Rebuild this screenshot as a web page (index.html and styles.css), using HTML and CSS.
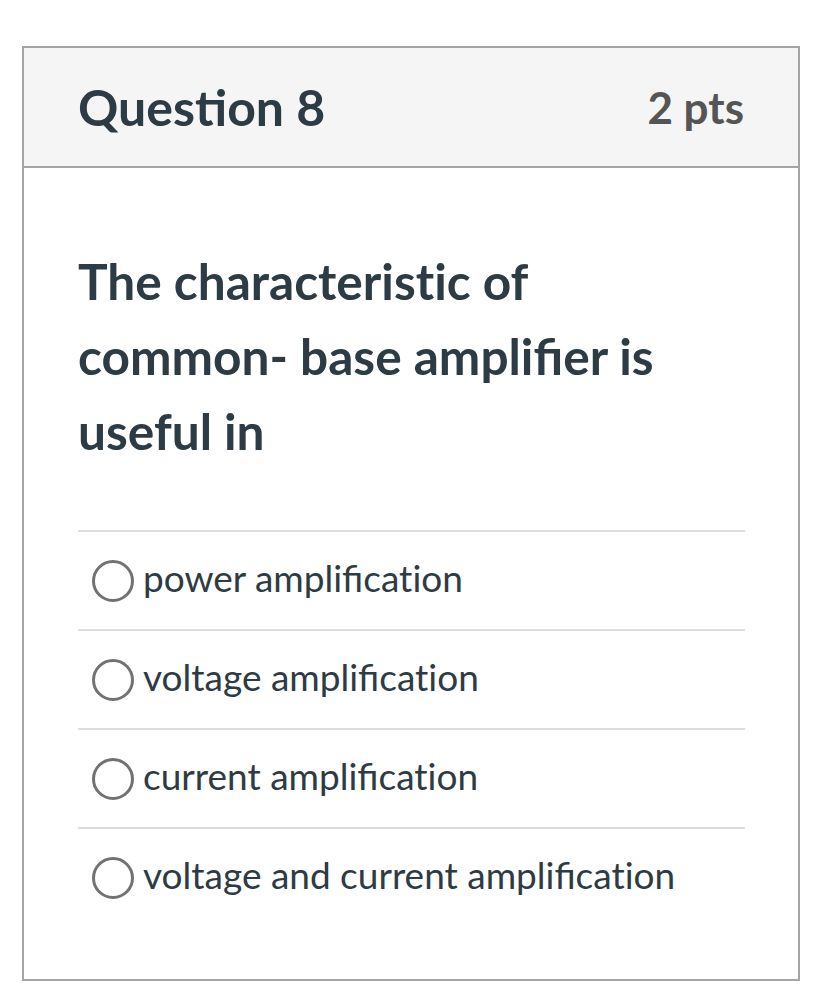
FILE: index.html
```html
<!DOCTYPE html>
<html>
<head>
<meta charset="utf-8">
<link rel="stylesheet" href="styles.css">
</head>
<body>
<div class="card">
  <div class="header">
    <h2 class="title">Question 8</h2>
    <div class="pts">2 pts</div>
  </div>
  <div class="body">
    <p class="question">The characterist&zwnj;ic of common- base amplifier is useful in</p>
    <ul class="answers">
      <li class="answer"><span class="radio"></span><span class="label">power amplificat&zwnj;ion</span></li>
      <li class="answer"><span class="radio"></span><span class="label">voltage amplificat&zwnj;ion</span></li>
      <li class="answer"><span class="radio"></span><span class="label">current amplificat&zwnj;ion</span></li>
      <li class="answer"><span class="radio"></span><span class="label">voltage and current amplificat&zwnj;ion</span></li>
    </ul>
  </div>
</div>
</body>
</html>
```
FILE: styles.css
```css
html, body {
  margin: 0;
  padding: 0;
  background: #ffffff;
}
body {
  font-family: Lato, "Liberation Sans", sans-serif;
  color: #2d3b45;
  padding: 46px 0 0 22px;
}
.card {
  width: 774px;
  height: 931px;
  border: 2px solid #a5a5a5;
  box-sizing: content-box;
}
.header {
  height: 118px;
  background: #f5f5f5;
  border-bottom: 2px solid #a5a5a5;
  display: flex;
  align-items: center;
  justify-content: space-between;
  padding: 0 54px 0 54px;
}
.title {
  margin: 0;
  font-size: 50px;
  font-weight: 700;
  color: #2d3b45;
}
.pts {
  font-size: 44px;
  font-weight: 700;
  color: #555555;
}
.body {
  padding: 0 53px 0 54px;
}
.question {
  margin: 76px 0 0 0;
  font-size: 49.6px;
  font-weight: 700;
  line-height: 75px;
  width: 620px;
}
.answers {
  list-style: none;
  margin: 61px 0 0 0;
  padding: 0;
}
.answer {
  height: 97px;
  border-top: 2px solid #dddddd;
  display: flex;
  align-items: center;
  padding-left: 14px;
}
.radio {
  width: 42px;
  height: 42px;
  border: 3px solid #727272;
  border-radius: 50%;
  box-sizing: border-box;
  margin-right: 9px;
  flex: none;
}
.label {
  font-size: 37px;
  color: #2d3b45;
  margin-bottom: 7px;
}
```
